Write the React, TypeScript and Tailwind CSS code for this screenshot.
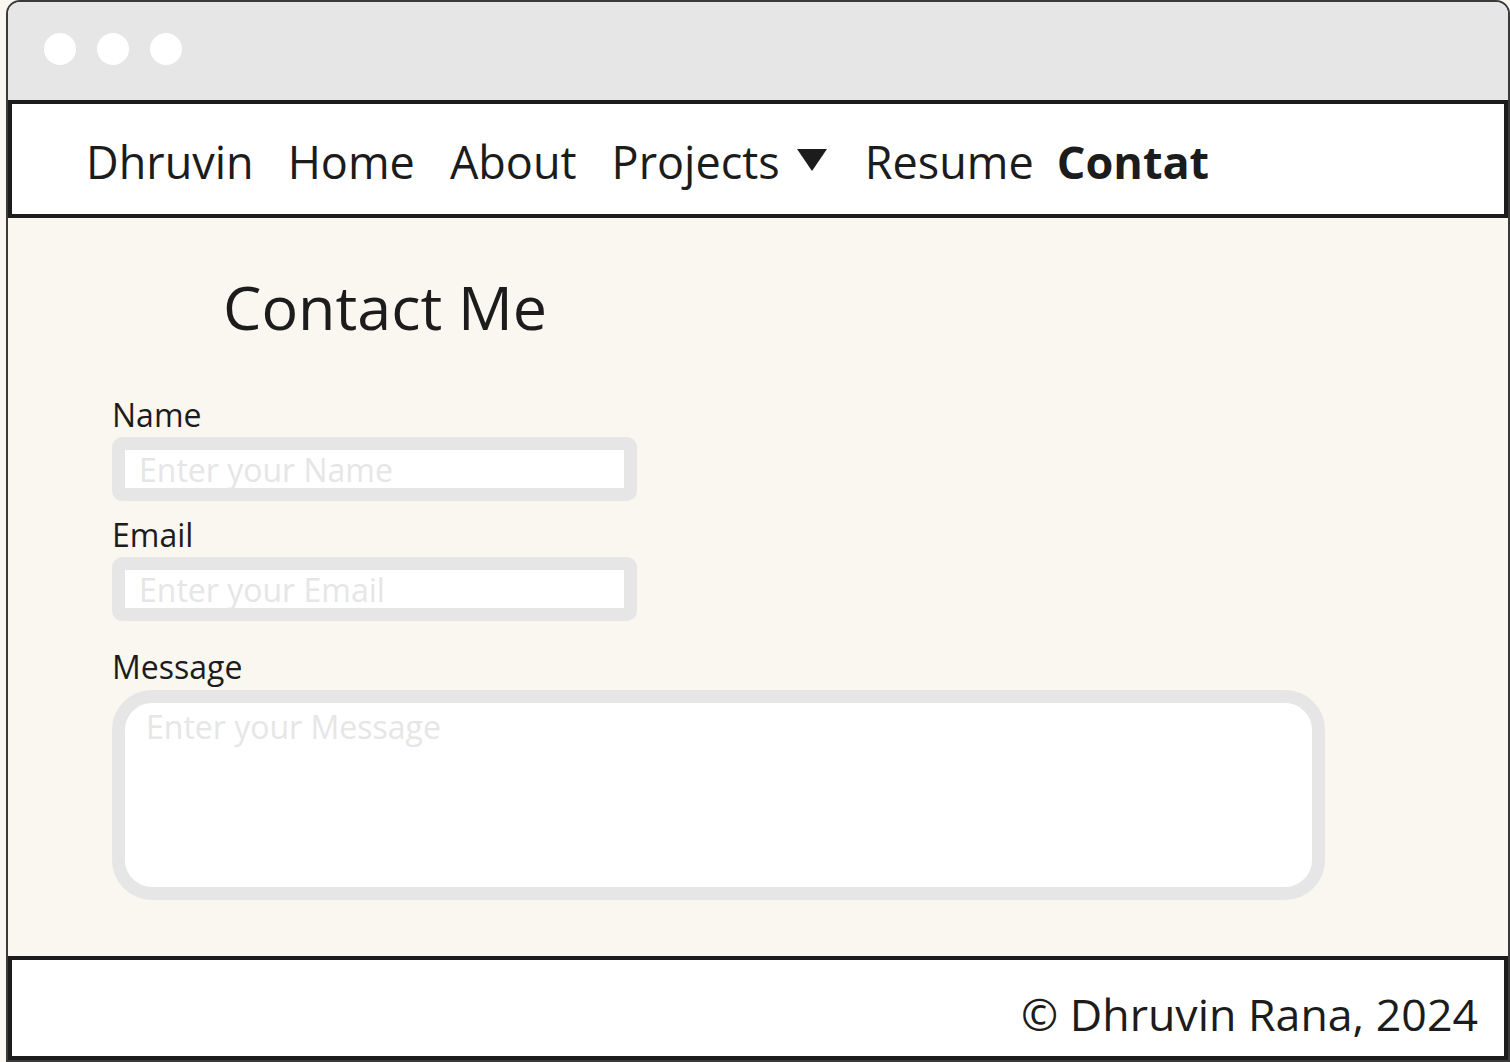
import React from "react";

const Field = ({ label, placeholder }: { label: string; placeholder: string }) => {
  return <div className="flex flex-col">
    <label className="text-[32px] leading-[32px] text-[#1c1c1c]">{label}</label>
    <input
      className="mt-[6px] w-[525px] h-[64px] border-[13px] border-[#e6e6e6] rounded-[10px] bg-white pl-[14px] text-[32px] outline-none placeholder:text-[#e6e6e6]"
      placeholder={placeholder}
    />
  </div>;
};

const App = () => {
  return <div className="w-[1510px] h-[1062px] bg-[#faf6f0] overflow-hidden font-['Open_Sans',sans-serif] text-[#1c1c1c]">
    <div className="ml-[6px] w-[1504px] h-[1062px] flex flex-col border-2 border-[#3a3a3a] rounded-t-[14px] overflow-hidden">
      {/* browser bar */}
      <div className="h-[98px] shrink-0 bg-[#e6e6e6] flex items-start gap-[21px] pl-[36px] pt-[31px]">
        <span className="w-[32px] h-[32px] rounded-full bg-white" />
        <span className="w-[32px] h-[32px] rounded-full bg-white" />
        <span className="w-[32px] h-[32px] rounded-full bg-white" />
      </div>

      {/* nav */}
      <nav className="h-[118px] shrink-0 border-4 border-[#1c1c1c] bg-white flex items-center pl-[74px] pt-[6px] text-[45px]">
        <span>Dhruvin</span>
        <span className="ml-[34px]">Home</span>
        <span className="ml-[35px]">About</span>
        <span className="ml-[35px] flex items-center">
          Projects
          <svg className="ml-[17px] mt-[-4px]" width="30" height="22" viewBox="0 0 30 22">
            <polygon points="0,0 30,0 15,22" fill="#1c1c1c" />
          </svg>
        </span>
        <span className="ml-[38px]">Resume</span>
        <span className="ml-[23px] font-bold">Contat</span>
      </nav>

      {/* content */}
      <main className="flex-1 flex flex-col pl-[104px] pt-[58px]">
        <h1 className="ml-[111px] text-[61px] leading-[61px]">Contact Me</h1>
        <div className="mt-[62px] flex flex-col gap-[18px]">
          <Field label="Name" placeholder="Enter your Name" />
          <Field label="Email" placeholder="Enter your Email" />
        </div>
        <div className="mt-[30px] flex flex-col">
          <label className="text-[32px] leading-[32px]">Message</label>
          <textarea
            className="mt-[7px] w-[1213px] h-[210px] border-[13px] border-[#e6e6e6] rounded-[40px] bg-white pl-[21px] pt-0 text-[32px] resize-none outline-none placeholder:text-[#e6e6e6]"
            placeholder="Enter your Message"
          />
        </div>
      </main>

      {/* footer */}
      <footer className="h-[104px] shrink-0 border-4 border-[#1c1c1c] bg-white flex items-center justify-end pr-[26px] pt-[12px] text-[44.7px]">
        © Dhruvin Rana, 2024
      </footer>
    </div>
  </div>;
};

export default App;
